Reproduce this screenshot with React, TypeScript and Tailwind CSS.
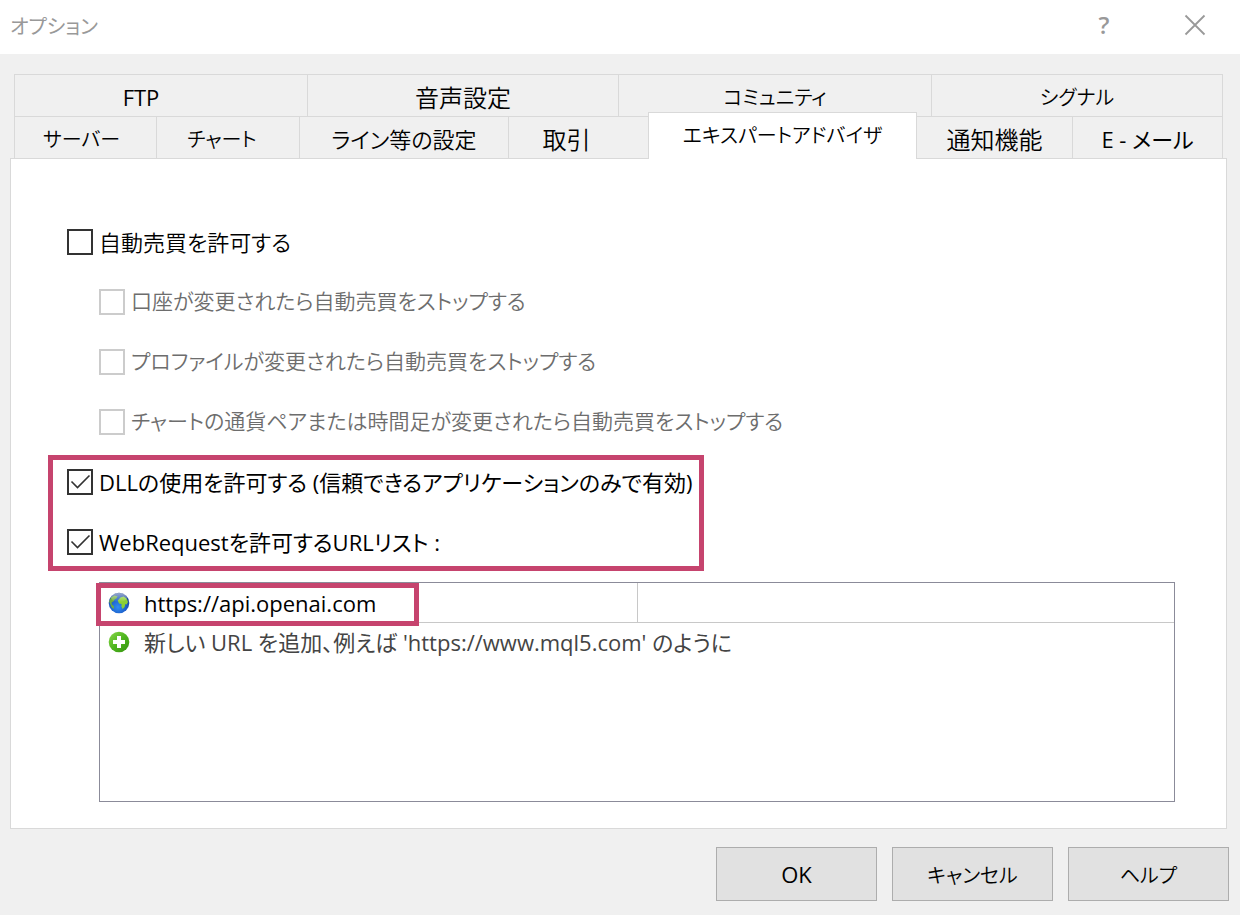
import { useState } from 'react';
import clsx from 'clsx';

interface Tab {
  label: string;
  className?: string;
}

interface CheckOptionProps {
  id: string;
  label: string;
  className?: string;
  checked?: boolean;
  disabled?: boolean;
}

const topTabs: Tab[] = [
  { label: 'FTP', className: 'pr-10 font-normal' },
  { label: '音声設定', className: 'text-2xl' },
  { label: 'コミュニティ', className: 'text-xl' },
  { label: 'シグナル', className: 'text-xl' },
];

const bottomTabs: Tab[] = [
  { label: 'サーバー', className: 'pr-2 text-xl' },
  { label: 'チャート', className: 'pr-3 text-xl' },
  { label: 'ライン等の設定' },
  { label: '取引', className: 'pr-6 text-2xl' },
  { label: 'エキスパートアドバイザ', className: 'text-xl' },
  { label: '通知機能', className: 'text-2xl' },
  { label: 'E - メール', className: 'font-normal' },
];

const CheckOption = ({ id, label, className, checked = false, disabled = false }: CheckOptionProps) => (
  <div
    className={clsx(
      'flex h-[60px] items-center gap-1.5',
      disabled ? 'ml-8 text-[21px] text-[#6d6d6d]' : 'text-[22px] text-black',
      className,
    )}
  >
    <span className="relative size-[26px] shrink-0">
      <input
        id={id}
        type="checkbox"
        defaultChecked={checked}
        disabled={disabled}
        className="peer block size-[26px] appearance-none border-2 border-[#333] bg-white disabled:border-[#ccc]"
      />
      <svg
        viewBox="0 0 26 26"
        className="pointer-events-none absolute inset-0 hidden size-[26px] peer-checked:block"
        fill="none"
        stroke="#333"
        strokeWidth="1.6"
      >
        <path d="M4.5 12.5 L10.5 18.5 L22.5 6.5" />
      </svg>
    </span>
    <label htmlFor={id} className="whitespace-nowrap">
      {label}
    </label>
  </div>
);

const GlobeIcon = () => (
  <svg viewBox="0 0 22 22" className="size-[22px] shrink-0">
    <defs>
      <radialGradient id="sea" cx="0.45" cy="0.7" r="0.65">
        <stop offset="0" stopColor="#2f8df2" />
        <stop offset="0.6" stopColor="#1d5fca" />
        <stop offset="1" stopColor="#1f4596" />
      </radialGradient>
      <linearGradient id="shine" x1="0" y1="0" x2="0" y2="1">
        <stop offset="0" stopColor="#fff" stopOpacity="0.55" />
        <stop offset="1" stopColor="#fff" stopOpacity="0" />
      </linearGradient>
    </defs>
    <circle cx="11" cy="11" r="10.3" fill="url(#sea)" />
    <path d="M1.2 9.5 L3 5.4 L6.4 3.4 L9.6 4.2 L8.4 6.4 L6.6 7.4 L5.4 9.6 L3.6 10.4 L3.8 12.6 L6 14.2 L5.6 17 L3.8 15.4 L2.4 12.6 Z" fill="#6fae3c" />
    <path d="M9.8 8.6 L12.4 5.6 L15.6 4.6 L18.6 6.6 L20 10 L18.6 12.4 L17.4 12 L16.6 15 L14.6 17 L13.4 14.6 L13.6 12 L11 11.4 Z" fill="#8bcf35" />
    <ellipse cx="11" cy="5.6" rx="8" ry="4.6" fill="url(#shine)" />
  </svg>
);

const AddIcon = () => (
  <svg viewBox="0 0 22 22" className="size-[22px] shrink-0">
    <defs>
      <linearGradient id="leaf" x1="0" y1="0" x2="1" y2="1">
        <stop offset="0" stopColor="#8bd84a" />
        <stop offset="0.5" stopColor="#4fb51f" />
        <stop offset="1" stopColor="#35920f" />
      </linearGradient>
    </defs>
    <circle cx="11" cy="11" r="10.3" fill="url(#leaf)" />
    <path d="M9 5 h4 v4 h4 v4 h-4 v4 h-4 v-4 h-4 v-4 h4 Z" fill="#fff" />
  </svg>
);

export default function App() {
  const [active, setActive] = useState('エキスパートアドバイザ');

  const renderTab = ({ label, className }: Tab) => (
    <button
      key={label}
      type="button"
      role="tab"
      aria-selected={active === label}
      onClick={() => setActive(label)}
      className={clsx(
        'border-t border-r border-[#d9d9d9] pt-1 whitespace-nowrap',
        active === label && 'relative z-10 -mt-1 -mb-px -ml-px border-l bg-white pb-1',
        className,
      )}
    >
      {label}
    </button>
  );

  return (
    <div className="flex min-h-screen flex-col bg-[#f0f0f0] font-['Open_Sans','Noto_Sans_CJK_JP',sans-serif] text-[22px] font-[350] text-black [font-feature-settings:'palt']">
      <header className="flex h-[54px] items-center bg-white pr-8 pb-1 pl-2.5 text-[#999]">
        <h1 className="flex-1 pt-1 text-xl font-normal">オプション</h1>
        <button type="button" aria-label="ヘルプを表示" className="mr-[68px] w-5 text-2xl font-semibold">
          ?
        </button>
        <button type="button" aria-label="閉じる" className="p-0.5">
          <svg viewBox="0 0 22 22" className="size-[22px]" stroke="#999" strokeWidth="1.8">
            <path d="M1.5 1.5 L20.5 20.5 M20.5 1.5 L1.5 20.5" />
          </svg>
        </button>
      </header>

      <main className="mt-5 mr-[13px] ml-2.5 flex flex-1 flex-col">
        <div role="tablist" className="mr-1 ml-1 border-l border-[#d9d9d9]">
          <div className="grid h-[42px] grid-cols-[293fr_311fr_313fr_291fr]">{topTabs.map(renderTab)}</div>
          <div className="grid h-[42px] grid-cols-[142fr_143fr_209fr_140fr_268fr_156fr_150fr]">
            {bottomTabs.map(renderTab)}
          </div>
        </div>

        <section role="tabpanel" className="flex-1 border border-[#d9d9d9] bg-white pt-[53px] pr-[51px] pb-[26px] pl-14">
          <CheckOption id="auto" label="自動売買を許可する" />
          <CheckOption id="account" label="口座が変更されたら自動売買をストップする" disabled />
          <CheckOption id="profile" label="プロファイルが変更されたら自動売買をストップする" disabled />
          <CheckOption id="symbol" label="チャートの通貨ペアまたは時間足が変更されたら自動売買をストップする" disabled />
          <div className="relative font-normal">
            <CheckOption id="dll" label="DLLの使用を許可する (信頼できるアプリケーションのみで有効)" checked />
            <CheckOption id="web" label="WebRequestを許可するURLリスト :" checked />
            <div className="pointer-events-none absolute top-[3px] bottom-px -left-[19px] w-[656px] border-5 border-[#c6446e]" />
          </div>

          <div className="relative mt-2.5 ml-8 h-[220px] border border-[#8b8b99] font-normal">
            <table className="w-full table-fixed">
              <tbody>
                <tr className="h-[39px] border-b border-[#c8c8c8]">
                  <td className="border-r border-[#c8c8c8] p-0 pt-0.5 pl-2">
                    <div className="flex items-center gap-3.5">
                      <GlobeIcon />
                      https://api.openai.com
                    </div>
                  </td>
                  <td />
                </tr>
                <tr className="h-10 text-[#444]">
                  <td colSpan={2} className="p-0 pl-2">
                    <div className="flex items-center gap-3.5">
                      <AddIcon />
                      新しい URL を追加、例えば 'https://www.mql5.com' のように
                    </div>
                  </td>
                </tr>
              </tbody>
            </table>
            <div className="pointer-events-none absolute top-0 -left-1 h-[43px] w-[323px] border-5 border-[#c6446e]" />
          </div>
        </section>
      </main>

      <footer className="flex justify-end gap-[15px] pt-[18px] pr-[11px] pb-3.5 text-xl">
        <button type="button" className="h-[54px] w-[161px] border border-[#adadad] bg-[#e1e1e1] text-[22px] font-normal">
          OK
        </button>
        <button type="button" className="h-[54px] w-[161px] border border-[#adadad] bg-[#e1e1e1] pt-1">
          キャンセル
        </button>
        <button type="button" className="h-[54px] w-[161px] border border-[#adadad] bg-[#e1e1e1] pt-1">
          ヘルプ
        </button>
      </footer>
    </div>
  );
}
